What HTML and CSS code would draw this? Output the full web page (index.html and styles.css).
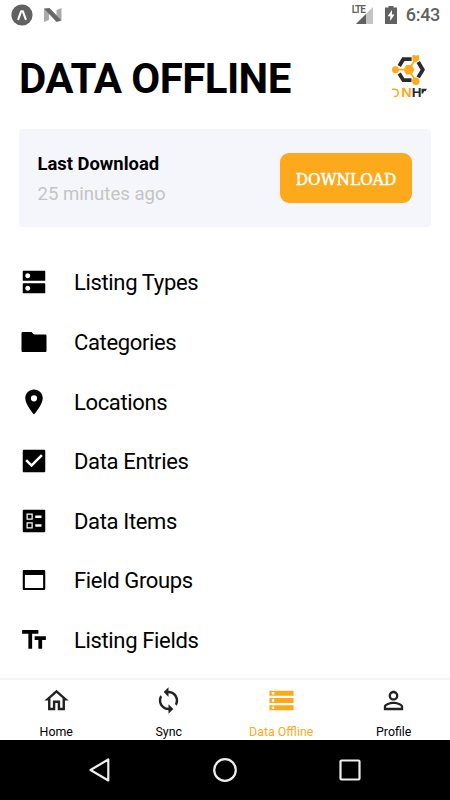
FILE: index.html
```html
<!DOCTYPE html>
<html lang="en">
<head>
<meta charset="utf-8">
<title>Data Offline</title>
<link rel="stylesheet" href="styles.css">
</head>
<body>
<div class="status">
  <svg class="status-app" width="22" height="22" viewBox="0 0 22 22"><circle cx="11" cy="11" r="10.6" fill="#616161"/><path d="M7.3 15.2 10.2 7.2h1.6l2.9 8" fill="none" stroke="#fff" stroke-width="2.1" stroke-linecap="round" stroke-linejoin="round"/></svg>
  <svg class="status-n" width="18" height="14" viewBox="0 0 18 14"><path d="M0 .5 5 4v8L0 14z" fill="#aaa"/><path d="M12.5 2 17.5 0v12.5l-5-3.5z" fill="#aaa"/><path d="M0 .5 5.5 0 17.5 12.5 12.5 14z" fill="#686868"/></svg>
  <span class="spacer"></span>
  <span class="lte">LTE</span>
  <svg class="signal" width="17" height="17" viewBox="0 0 17 17"><path d="M17 0v17H0z" fill="#c4c4c4"/><path d="M10 7v10H0z" fill="#616161"/></svg>
  <svg class="battery" width="12" height="18" viewBox="0 0 12 18"><path d="M3.5 0h5v1.6H12V18H0V1.6h3.5z" fill="#616161"/><path d="M7 4 2.6 10.3h2.6V15l4.3-6.4H7z" fill="#fff"/></svg>
  <span class="clock">6:43</span>
</div>
<header class="header">
  <h1>DATA OFFLINE</h1>
  <svg class="logo" width="40" height="48" viewBox="0 0 40 48">
    <g fill="none" stroke="#2b2b2b" stroke-width="3.8"><path d="M9.2 15 13.3 8.2h8.3M28.2 11l4.6 7.7-4.6 7.7M21.5 29.2h-8.2l-4.1-6.6"/></g>
    <path d="M7 18.700h12L26 7M19 18.700 26 31" fill="none" stroke="#fcaa1b" stroke-width="1.700"/>
    <g fill="#fcaa1b"><path d="M13.600 18.700 16.300 13.900h5.400l2.700 4.800-2.700 4.800h-5.400z"/><circle cx="5.500" cy="18.700" r="3.500"/><path d="M22.600 4 26.300 4.600l2.600-.6.300 4.800-3.600 2.600-3.300-2.300z"/><circle cx="25.800" cy="30.200" r="3.700"/></g>
    <path d="M2 38.300h2.500c4.900 0 4.900 7.200 0 7.200H4" fill="none" stroke="#fcaa1b" stroke-width="1.500"/>
    <text class="logo-text" x="11.200" y="46.300" textLength="10.500" lengthAdjust="spacingAndGlyphs" fill="#fcaa1b">N</text>
    <text class="logo-text heavy" x="21.700" y="46.300" textLength="9.800" lengthAdjust="spacingAndGlyphs" fill="#2b2b2b">H</text>
    <path d="M31.500 37.800h5.500l-1.500 2.500-1.200-.4-1.300 2.500h-1.500z" fill="#2b2b2b"/>
  </svg>
</header>
<section class="card">
  <div>
    <p class="card-title">Last Download</p>
    <p class="card-time">25 minutes ago</p>
  </div>
  <button class="download" type="button">DOWNLOAD</button>
</section>
<ul class="list">
  <li><svg viewBox="0 0 24 24"><path d="M20.500 13h-17c-.3 0-.5.200-.5.500v7c0 .3.200.5.500.5h17c.3 0 .5-.2.500-.5v-7c0-.3-.2-.5-.5-.5zM7 19c-1.100 0-2-.9-2-2s.9-2 2-2 2 .9 2 2-.9 2-2 2zM20.500 3h-17c-.3 0-.5.200-.5.500v7c0 .3.200.5.500.5h17c.3 0 .5-.2.500-.5v-7c0-.3-.2-.5-.5-.5zM7 9c-1.100 0-2-.9-2-2s.9-2 2-2 2 .9 2 2-.9 2-2 2z"/></svg><span>Listing Types</span></li>
  <li><svg viewBox="0 0 24 24"><path d="M10 4H3c-.6 0-1 .4-1 1v14c0 .6.400 1 1 1h18c.6 0 1-.4 1-1V7c0-.6-.4-1-1-1h-9l-2-2z"/></svg><span>Categories</span></li>
  <li><svg viewBox="0 0 24 24"><path d="M12 2C8.130 2 5 5.130 5 9c0 5.250 7 13 7 13s7-7.750 7-13c0-3.870-3.130-7-7-7zm0 9.500a2.500 2.500 0 1 1 0-5 2.500 2.500 0 0 1 0 5z"/></svg><span>Locations</span></li>
  <li><svg viewBox="0 0 24 24"><path d="M20 3H4c-.6 0-1 .4-1 1v16c0 .6.400 1 1 1h16c.6 0 1-.4 1-1V4c0-.6-.4-1-1-1zm-10 14l-5-5 1.410-1.410L10 14.170l7.590-7.590L19 8l-9 9z"/></svg><span>Data Entries</span></li>
  <li><svg viewBox="0 0 24 24"><path d="M13 9.500h5v-2h-5v2zm0 7h5v-2h-5v2zm7 4.500H4c-.6 0-1-.4-1-1V4c0-.6.400-1 1-1h16c.6 0 1 .4 1 1v16c0 .6-.4 1-1 1zM6 11h5V6H6v5zm1-4h3v3H7V7zM6 18h5v-5H6v5zm1-4h3v3H7v-3z"/></svg><span>Data Items</span></li>
  <li><svg viewBox="0 0 24 24"><path d="M20 4H4c-.6 0-1 .4-1 1v14c0 .6.400 1 1 1h16c.6 0 1-.4 1-1V5c0-.6-.4-1-1-1zm-.7 14.300H4.700V8h14.600v10.300z"/></svg><span>Field Groups</span></li>
  <li><svg viewBox="0 0 24 24"><path d="M2.500 4v3h5v12h3V7h5V4h-13zm19 5h-9v3h3v7h3v-7h3V9z"/></svg><span>Listing Fields</span></li>
</ul>
<nav class="tabs">
  <div class="tab"><svg viewBox="0 0 24 24"><path d="M12 5.690l5 4.500V18h-2v-6H9v6H7v-7.810l5-4.500M12 3L2 12h3v8h6v-6h2v6h6v-8h3L12 3z"/></svg><span>Home</span></div>
  <div class="tab"><svg viewBox="0 0 24 24"><path d="M12 4V1L8 5l4 4V6c3.310 0 6 2.690 6 6 0 1.010-.25 1.970-.7 2.800l1.460 1.460C19.540 15.030 20 13.570 20 12c0-4.420-3.580-8-8-8zm0 14c-3.310 0-6-2.690-6-6 0-1.010.25-1.970.7-2.800L5.240 7.740C4.460 8.970 4 10.430 4 12c0 4.420 3.580 8 8 8v3l4-4-4-4v3z"/></svg><span>Sync</span></div>
  <div class="tab active"><svg viewBox="0 0 24 24"><path d="M2 20h20v-4H2v4zm2-3h2v2H4v-2zM2 4v4h20V4H2zm4 3H4V5h2v2zm-4 7h20v-4H2v4zm2-3h2v2H4v-2z"/></svg><span>Data Offline</span></div>
  <div class="tab"><svg viewBox="0 0 24 24"><path d="M12 5.900a2.100 2.100 0 1 1 0 4.200 2.100 2.100 0 0 1 0-4.200m0 9c2.970 0 6.100 1.460 6.100 2.100v1.100H5.900V17c0-.64 3.130-2.100 6.100-2.100M12 4C9.790 4 8 5.790 8 8s1.790 4 4 4 4-1.790 4-4-1.790-4-4-4zm0 9c-2.670 0-8 1.340-8 4v3h16v-3c0-2.660-5.330-4-8-4z"/></svg><span>Profile</span></div>
</nav>
<footer class="system">
  <svg width="26" height="26" viewBox="0 0 26 26"><path d="M21.300 2.500v21L3.500 13z"/></svg>
  <svg width="26" height="26" viewBox="0 0 26 26"><circle cx="13" cy="13" r="10.800"/></svg>
  <svg width="26" height="26" viewBox="0 0 26 26"><rect x="3.500" y="3.500" width="19" height="19" rx="1"/></svg>
</footer>
</body>
</html>
```
FILE: styles.css
```css
* { box-sizing: border-box; }
body {
  margin: 0;
  width: 450px;
  height: 800px;
  overflow: hidden;
  display: flex;
  flex-direction: column;
  background: #fff;
  color: #000;
  font-family: Roboto, sans-serif;
}
svg { display: block; flex: none; }
h1, p, ul { margin: 0; padding: 0; }
.status { height: 30px; flex: none; display: flex; align-items: center; padding: 0 10px 0 11px; color: #616161; }
.status-n { margin-left: 11px; }
.spacer { flex: 1; }
.lte { font-size: 10px; line-height: 10px; font-weight: 600; letter-spacing: -0.9px; align-self: flex-start; margin-top: 5px; margin-right: -11px; width: 15px; z-index: 1; }
.battery { margin: 0 9px 0 12px; }
.clock { font-size: 18px; font-weight: 500; letter-spacing: -0.3px; line-height: 32px; }
.header { height: 99px; flex: none; display: flex; justify-content: space-between; padding: 0 20px 0 19px; }
h1 { font-size: 42px; line-height: 50px; font-weight: 700; letter-spacing: -0.55px; margin-top: 24px; white-space: nowrap; }
.logo { margin-top: 21px; }
.logo-text { font-family: "Liberation Sans", sans-serif; font-size: 12px; font-weight: 700; }
.card { height: 98px; flex: none; margin: 0 19px; padding: 0 19px 0 18.500px; border-radius: 4px; background: #f5f6fb; display: flex; align-items: center; justify-content: space-between; }
.card-title { font-size: 18.400px; line-height: 30px; font-weight: 700; padding-top: 2px; }
.card-time { font-size: 18.600px; line-height: 30px; color: #c4c4c4; }
.download { width: 132px; height: 50px; padding: 2px 0 0; border: 0; border-radius: 9px; background: #fcaa1b; color: #fff; font-family: "DejaVu Serif Condensed", "DejaVu Serif", serif; font-size: 17px; letter-spacing: 0.1px; -webkit-text-stroke: 0.5px #fff; }
.list { list-style: none; height: 451px; flex: none; padding: 25.600px 0 0 19px; overflow: hidden; }
.list li { height: 59.600px; display: flex; align-items: center; gap: 25px; font-size: 22px; letter-spacing: -0.350px; }
.list svg { width: 30px; height: 30px; }
.list span { line-height: 30px; padding-top: 2px; }
.tabs { height: 62px; flex: none; display: grid; grid-template-columns: repeat(4, 1fr); border-top: 2px solid #f4f4f4; background: #fff; }
.tab { display: flex; flex-direction: column; align-items: center; font-size: 12.400px; line-height: 16px; padding-top: 6px; }
.tab svg { width: 29px; height: 29px; fill: #222; margin-bottom: 9px; }
.tab.active { color: #fcaa1b; }
.tab.active svg { fill: #fcaa1b; }
.system { height: 60px; flex: none; display: flex; align-items: center; justify-content: center; gap: 99px; background: #000; }
.system svg { fill: none; stroke: #eee; stroke-width: 2.200px; stroke-linejoin: round; }
```
